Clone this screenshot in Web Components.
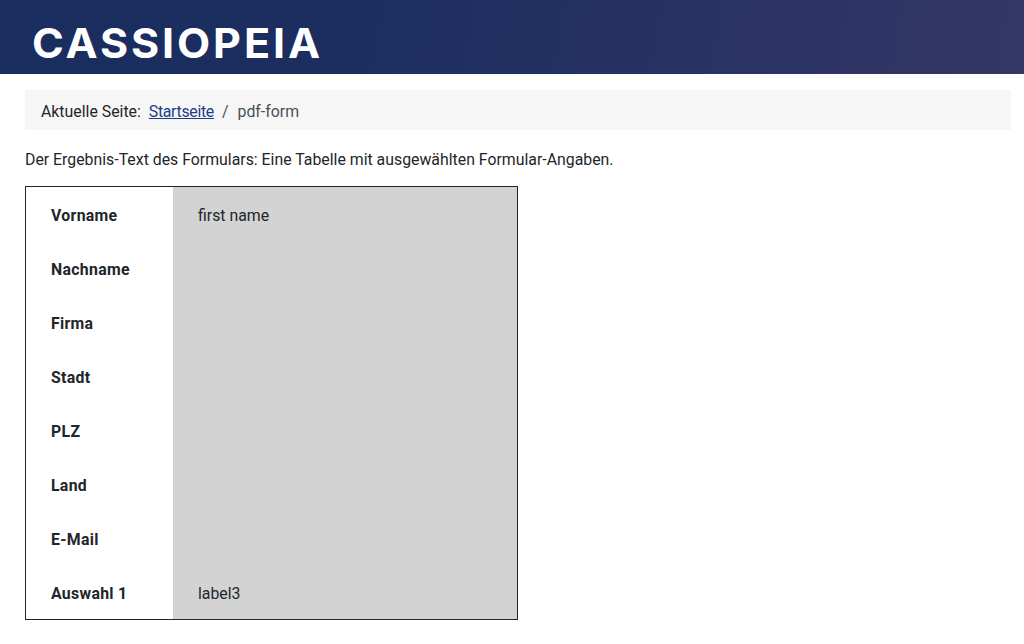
<!DOCTYPE html>
<html lang="de">
<head>
<meta charset="utf-8">
<title>Cassiopeia</title>
<style>
  html, body { margin: 0; background: #fff; }
  body { font: 15.85px/24px Roboto, "Open Sans", sans-serif; color: #22262a; }
</style>
</head>
<body>
<site-header>CASSIOPEIA</site-header>
<site-main>
  <bread-crumbs current="pdf-form" home="Startseite"></bread-crumbs>
  <p>Der Ergebnis-Text des Formulars: Eine Tabelle mit ausgewählten Formular-Angaben.</p>
  <result-table>
    <result-row label="Vorname">first name</result-row>
    <result-row label="Nachname"></result-row>
    <result-row label="Firma"></result-row>
    <result-row label="Stadt"></result-row>
    <result-row label="PLZ"></result-row>
    <result-row label="Land"></result-row>
    <result-row label="E-Mail"></result-row>
    <result-row label="Auswahl 1">label3</result-row>
  </result-table>
</site-main>
<script>
class SiteHeader extends HTMLElement {
    constructor() {
        super();
        this.attachShadow({ mode: 'open' }).innerHTML = `
          <style>
            :host {
              display: flex;
              align-items: center;
              height: 74px;
              padding: 12px 0 0 32px;
              box-sizing: border-box;
              background: linear-gradient(100deg, #1a2d5f 0%, #1c2e60 35%, #343767 100%);
              color: #fff;
              font: 700 41px/1 "Inter", sans-serif;
              letter-spacing: 2.75px;
            }
            span { display: inline-block; transform: scaleX(1.05); transform-origin: left center; }
          </style>
          <span><slot></slot></span>`;
    }
}

class SiteMain extends HTMLElement {
    constructor() {
        super();
        this.attachShadow({ mode: 'open' }).innerHTML = `
          <style>
            :host { display: block; padding: 16px 13px 0 25px; }
            ::slotted(p) { margin: 18px 0 14px; }
          </style>
          <slot></slot>`;
    }
}

class BreadCrumbs extends HTMLElement {
    constructor() {
        super();
        this.attachShadow({ mode: 'open' }).innerHTML = `
          <style>
            :host {
              display: flex;
              gap: 8px;
              height: 40px;
              box-sizing: border-box;
              padding: 4px 0 0 16px;
              align-items: center;
              background: #f6f6f6;
            }
            a { color: #1c3d87; letter-spacing: -0.3px; }
            .sep { margin-right: 1px; }
            .sep, .current { color: #495057; }
          </style>
          <span>Aktuelle Seite:</span>
          <a href="#" class="home"></a>
          <span class="sep">/</span>
          <span class="current"></span>`;
        this.shadowRoot.querySelector('.home').innerText = this.getAttribute('home');
        this.shadowRoot.querySelector('.current').innerText = this.getAttribute('current');
    }
}

class ResultTable extends HTMLElement {
    constructor() {
        super();
        this.attachShadow({ mode: 'open' }).innerHTML = `
          <style>
            :host { display: block; width: 491px; border: 1px solid #22262a; }
          </style>
          <slot></slot>`;
    }
}

class ResultRow extends HTMLElement {
    constructor() {
        super();
        this.attachShadow({ mode: 'open' }).innerHTML = `
          <style>
            :host { display: grid; grid-template-columns: 147px 1fr; height: 54px; }
            div { display: flex; align-items: center; padding-top: 4px; box-sizing: border-box; }
            .label { padding-left: 25px; font-weight: 700; letter-spacing: 0.3px; }
            .value { padding-left: 25px; background: #d3d3d3; }
          </style>
          <div class="label"></div>
          <div class="value"><slot></slot></div>`;
        this.shadowRoot.querySelector('.label').innerText = this.getAttribute('label');
    }
}

customElements.define('site-header', SiteHeader);
customElements.define('site-main', SiteMain);
customElements.define('bread-crumbs', BreadCrumbs);
customElements.define('result-table', ResultTable);
customElements.define('result-row', ResultRow);
</script>
</body>
</html>
